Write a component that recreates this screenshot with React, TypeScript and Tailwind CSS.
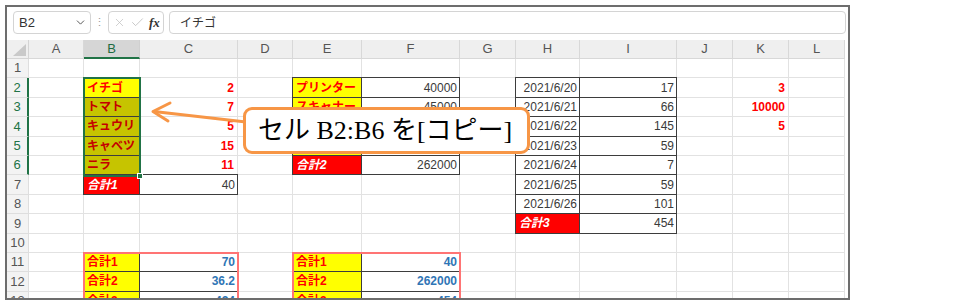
import { ChevronDown, X, Check } from "lucide-react";

type Kind = "act" | "yel" | "sel" | "red" | "num" | "rnum" | "blue";

const cols = ["A", "B", "C", "D", "E", "F", "G", "H", "I", "J", "K", "L"];

// E4:F5 sit under the callout, so they are left without text
const cells: Record<string, [Kind, string]> = {
  B2: ["act", "イチゴ"],
  B3: ["sel", "トマト"],
  B4: ["sel", "キュウリ"],
  B5: ["sel", "キャベツ"],
  B6: ["sel", "ニラ"],
  B7: ["red", "合計1"],
  C2: ["rnum", "2"],
  C3: ["rnum", "7"],
  C4: ["rnum", "5"],
  C5: ["rnum", "15"],
  C6: ["rnum", "11"],
  C7: ["num", "40"],
  E2: ["yel", "プリンター"],
  E3: ["yel", "スキャナー"],
  E4: ["yel", ""],
  E5: ["yel", ""],
  E6: ["red", "合計2"],
  F2: ["num", "40000"],
  F3: ["num", "45000"],
  F4: ["num", ""],
  F5: ["num", ""],
  F6: ["num", "262000"],
  H2: ["num", "2021/6/20"],
  H3: ["num", "2021/6/21"],
  H4: ["num", "2021/6/22"],
  H5: ["num", "2021/6/23"],
  H6: ["num", "2021/6/24"],
  H7: ["num", "2021/6/25"],
  H8: ["num", "2021/6/26"],
  H9: ["red", "合計3"],
  I2: ["num", "17"],
  I3: ["num", "66"],
  I4: ["num", "145"],
  I5: ["num", "59"],
  I6: ["num", "7"],
  I7: ["num", "59"],
  I8: ["num", "101"],
  I9: ["num", "454"],
  K2: ["rnum", "3"],
  K3: ["rnum", "10000"],
  K4: ["rnum", "5"],
  B11: ["yel", "合計1"],
  B12: ["yel", "合計2"],
  B13: ["yel", "合計3"],
  C11: ["blue", "70"],
  C12: ["blue", "36.2"],
  C13: ["blue", "424"],
  E11: ["yel", "合計1"],
  E12: ["yel", "合計2"],
  E13: ["yel", "合計3"],
  F11: ["blue", "40"],
  F12: ["blue", "262000"],
  F13: ["blue", "454"],
};

const boxed = "relative -ml-px -mt-px border border-[#3d3d3d]";

const kindClass: Record<Kind, string> = {
  act: `${boxed} bg-[#ffff00] text-[#ff0000] font-bold justify-start pl-[3px]`,
  yel: `${boxed} bg-[#ffff00] text-[#ff0000] font-bold justify-start pl-[3px]`,
  sel: `${boxed} bg-[#c6c400] text-[#c40000] font-bold justify-start pl-[3px]`,
  red: `${boxed} bg-[#ff0000] text-white font-bold italic justify-start pl-[3px]`,
  num: `${boxed} text-[#3a3a3a] justify-end pr-[2px]`,
  rnum: "border-r border-b border-[#e2e2e2] text-[#ff0000] font-bold justify-end pr-[3px]",
  blue: `${boxed} text-[#2f75b5] font-bold justify-end pr-[2px]`,
};

const selRows = [2, 3, 4, 5, 6];

const App = () => {
  const rows = Array.from({ length: 14 }, (_, i) => i);

  return (
    <div className="relative w-[956px] h-[306px] bg-white overflow-hidden font-['Liberation_Sans','Noto_Sans_CJK_JP',sans-serif]">
      <div className="ml-[5px] mt-[5px] w-[845px] h-[295px] border-2 border-[#6d6d6d] overflow-hidden flex flex-col bg-white">
        {/* formula bar */}
        <div className="h-[33px] shrink-0 flex items-start pt-[4px] pl-[6px]">
          <div className="w-[78px] h-[23px] border border-[#d4d4d4] rounded-[4px] flex items-center justify-between pl-[5px] pr-[3px] text-[13px] text-[#333]">
            B2
            <ChevronDown size={13} strokeWidth={1.8} className="text-[#555]" />
          </div>
          <div className="w-[17px] h-[23px] flex items-center justify-center text-[11px] text-[#9a9a9a]">⋮</div>
          <div className="w-[56px] h-[23px] border border-[#d4d4d4] rounded-[4px] flex items-center pl-[4px] gap-[4px]">
            <X size={13} strokeWidth={1.3} className="text-[#bdbdbd]" />
            <Check size={15} strokeWidth={1.3} className="text-[#bdbdbd]" />
            <span className="text-[13px] italic font-bold text-[#333] font-['Liberation_Serif',serif] leading-none">fx</span>
          </div>
          <div className="ml-[5px] mr-[2px] flex-1 h-[23px] border border-[#d4d4d4] rounded-[4px] flex items-center pl-[10px] text-[12px] text-[#333]">
            イチゴ
          </div>
        </div>

        {/* sheet */}
        <div className="relative flex-1 overflow-hidden">
          <div className="grid grid-cols-[22px_55px_56px_98px_55px_69px_98px_56px_64px_97px_56px_56px_56px] grid-rows-[19px_repeat(13,19.4px)] text-[12px]">
            {rows.map((r) =>
              [-1, ...cols.map((_, i) => i)].map((ci) => {
                if (r === 0 && ci === -1) {
                  return (
                    <div key="corner" className="bg-[#efefef] border-r border-b border-[#d4d4d4] flex items-end justify-end pr-[2px] pb-[2px]">
                      <svg width="13" height="12" viewBox="0 0 13 12">
                        <polygon points="13,0 13,12 0,12" fill="#c9c9c9" />
                      </svg>
                    </div>
                  );
                }
                if (r === 0) {
                  const isB = cols[ci] === "B";
                  return (
                    <div
                      key={`h${ci}`}
                      className={
                        isB
                          ? "bg-[#d6d6d6] border-r border-[#d0d0d0] border-b-2 border-b-[#217346] flex items-center justify-center text-[13px] text-[#1e6b41]"
                          : "bg-[#efefef] border-r border-b border-[#d8d8d8] flex items-center justify-center text-[13px] text-[#555]"
                      }
                    >
                      {cols[ci]}
                    </div>
                  );
                }
                if (ci === -1) {
                  const on = selRows.includes(r);
                  return (
                    <div
                      key={`r${r}`}
                      className={
                        on
                          ? "bg-[#f3f3f3] border-b border-[#dedede] border-r-2 border-r-[#217346] flex items-center justify-center text-[13px] text-[#217346]"
                          : "bg-[#f3f3f3] border-r border-b border-[#dedede] flex items-center justify-center text-[13px] text-[#555]"
                      }
                    >
                      {r}
                    </div>
                  );
                }
                const key = `${cols[ci]}${r}`;
                const cell = cells[key];
                if (!cell) {
                  return <div key={key} className="border-r border-b border-[#e2e2e2]" />;
                }
                return (
                  <div key={key} className={`flex items-center whitespace-nowrap overflow-hidden ${kindClass[cell[0]]}`}>
                    {cell[1]}
                  </div>
                );
              })
            )}
          </div>

          {/* selection B2:B6 */}
          <div className="absolute left-[76px] top-[37px] w-[58px] h-[100px] border-2 border-[#217346] pointer-events-none" />
          <div className="absolute left-[130px] top-[133px] w-[6px] h-[6px] bg-[#217346] border border-white pointer-events-none" />

          {/* copy ranges */}
          <div className="absolute left-[76px] top-[212px] w-[156px] h-[64px] border-2 border-[#ff7474] pointer-events-none" />
          <div className="absolute left-[285px] top-[212px] w-[169px] h-[64px] border-2 border-[#ff7474] pointer-events-none" />
        </div>
      </div>

      {/* arrow */}
      <svg className="absolute left-0 top-0 pointer-events-none" width="956" height="306" viewBox="0 0 956 306">
        <line x1="246" y1="122" x2="154" y2="111.5" stroke="#f79646" strokeWidth="3" strokeLinecap="round" />
        <polyline points="170,103 153,111.5 168,121" fill="none" stroke="#f79646" strokeWidth="3" strokeLinecap="round" strokeLinejoin="round" />
      </svg>

      {/* callout */}
      <div className="absolute left-[243px] top-[107px] w-[287px] h-[47px] bg-white border-[3px] border-[#f79646] rounded-[9px] flex items-center pl-[12px] text-[26px] text-black whitespace-nowrap font-['Liberation_Serif','Noto_Sans_CJK_JP',serif]">
        セル B2:B6 を[コピー]
      </div>
    </div>
  );
};

export default App;
